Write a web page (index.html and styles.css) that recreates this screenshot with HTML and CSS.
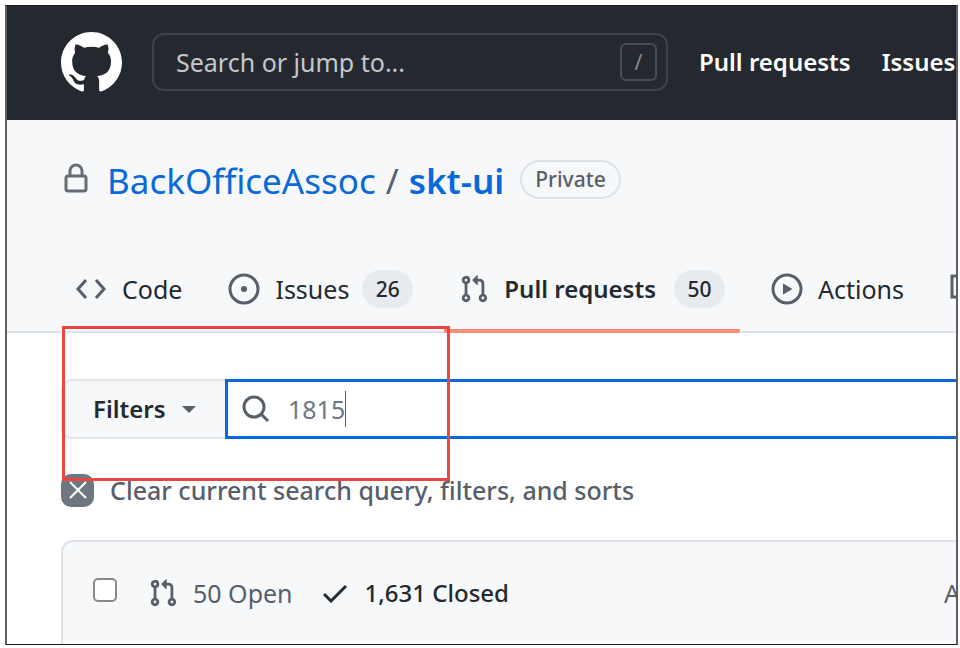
FILE: index.html
```html
<!DOCTYPE html>
<html lang="en">
<head>
<meta charset="utf-8">
<title>Pull requests · BackOfficeAssoc/skt-ui</title>
<link rel="stylesheet" href="styles.css">
</head>
<body>
<svg class="sprite" aria-hidden="true">
  <symbol id="pull-request" viewBox="0 0 16 16"><path fill-rule="evenodd" d="M7.177 3.073L9.573.677A.25.25 0 0110 .854v4.792a.25.25 0 01-.427.177L7.177 3.427a.25.25 0 010-.354zM3.75 2.5a.75.75 0 100 1.5.75.75 0 000-1.5zm-2.25.75a2.25 2.25 0 113 2.122v5.256a2.251 2.251 0 11-1.5 0V5.372A2.25 2.25 0 011.5 3.25zM11 2.5h-1V4h1a1 1 0 011 1v5.628a2.251 2.251 0 101.5 0V5A2.5 2.5 0 0011 2.5zm1 10.25a.75.75 0 111.5 0 .75.75 0 01-1.5 0zM3.75 12a.75.75 0 100 1.5.75.75 0 000-1.5z"/></symbol>
</svg>
<div class="frame">
  <header class="topbar">
    <a class="logo" href="#" aria-label="Homepage">
      <svg viewBox="0 0 16 16"><path fill-rule="evenodd" d="M8 0C3.58 0 0 3.58 0 8c0 3.54 2.29 6.53 5.47 7.59.4.07.55-.17.55-.38 0-.19-.01-.82-.01-1.49-2.01.37-2.53-.49-2.69-.94-.09-.23-.48-.94-.82-1.13-.28-.15-.68-.52-.01-.53.63-.01 1.08.58 1.23.82.72 1.21 1.87.87 2.33.66.07-.52.28-.87.51-1.07-1.78-.2-3.64-.89-3.64-3.95 0-.87.31-1.59.82-2.15-.08-.2-.36-1.02.08-2.12 0 0 .67-.21 2.2.82.64-.18 1.32-.27 2-.27.68 0 1.36.09 2 .27 1.53-1.04 2.2-.82 2.2-.82.44 1.1.16 1.92.08 2.12.51.56.82 1.27.82 2.15 0 3.07-1.87 3.75-3.65 3.95.29.25.54.73.54 1.48 0 1.07-.01 1.93-.01 2.2 0 .21.15.46.55.38A8.013 8.013 0 0016 8c0-4.42-3.58-8-8-8z"/></svg>
    </a>
    <label class="jump">
      <input type="text" placeholder="Search or jump to..." aria-label="Search or jump to">
      <kbd>/</kbd>
    </label>
    <nav class="topnav">
      <a href="#">Pull requests</a>
      <a href="#">Issues</a>
    </nav>
  </header>

  <section class="repo">
    <h1 class="title">
      <svg class="lock" viewBox="0 0 24 30"><rect x="2" y="13" width="20" height="15" rx="2"/><path d="M6 13V8a6 6 0 0112 0v5"/></svg>
      <span class="path"><a href="#">BackOfficeAssoc</a><span class="slash">/</span><a class="name" href="#">skt-ui</a></span>
      <span class="badge">Private</span>
    </h1>
    <nav class="tabs">
      <a class="tab" href="#"><svg class="icon" viewBox="0 0 32 32"><path class="line" d="M11 7L3 16l8 9M21 7l8 9-8 9"/></svg>Code</a>
      <a class="tab" href="#"><svg class="icon" viewBox="0 0 32 32"><circle class="line" cx="16" cy="16" r="14"/><circle cx="16" cy="16" r="3"/></svg>Issues<span class="count">26</span></a>
      <a class="tab current" href="#"><svg class="icon branch"><use href="#pull-request"/></svg>Pull requests<span class="count">50</span></a>
      <a class="tab" href="#"><svg class="icon" viewBox="0 0 32 32"><circle class="line" cx="16" cy="16" r="14"/><path d="M12 10.500v11l9.500-5.500z"/></svg>Actions</a>
      <a class="tab" href="#" aria-label="Projects"><svg class="icon" viewBox="0 0 32 32"><path class="line" d="M2 3h27v26H19v-5H2zM12 3v21"/></svg></a>
    </nav>
  </section>

  <main class="content">
    <div class="search">
      <button class="filters" type="button">Filters<span class="arrow"></span></button>
      <label class="query">
        <svg viewBox="0 0 28 28"><circle cx="12" cy="12" r="10"/><path d="M19 19l7 7"/></svg>
        <input type="text" value="1815" aria-label="Search all pull requests">
        <span class="caret"></span>
      </label>
    </div>
    <a class="clear" href="#">
      <span class="cross"><svg viewBox="0 0 20 20"><path d="M2 2l16 16M18 2L2 18"/></svg></span>
      Clear current search query, filters, and sorts
    </a>
    <div class="list">
      <input class="pick" type="checkbox" aria-label="Select all pull requests">
      <a class="state" href="#"><svg class="icon branch"><use href="#pull-request"/></svg>50 Open</a>
      <a class="state closed" href="#"><svg class="check" viewBox="0 0 24 20"><path d="M1 11l7 7L23 3"/></svg>1,631 Closed</a>
      <a class="author" href="#">Author</a>
    </div>
    <div class="highlight"></div>
  </main>
</div>
</body>
</html>
```
FILE: styles.css
```css
* { box-sizing: border-box; }
body {
  margin: 0;
  padding: 5px 2px 3px 5px;
  background: #fff;
  color: #24292f;
  font: 25px/36px "Noto Sans", "Open Sans", sans-serif;
}
a { color: inherit; text-decoration: none; }
svg { display: block; flex: none; }
input, button { font: inherit; color: inherit; }
.sprite { position: absolute; width: 0; height: 0; }
.frame { border: 1px solid; border-width: 1px 2px; border-color: #16191c #5c5f63; overflow: hidden; white-space: nowrap; }

.topbar { display: flex; align-items: center; height: 114px; padding: 0 0 2px 54px; background: #24292f; }
.logo svg { width: 61px; height: 61px; fill: #fff; }
.jump { display: flex; flex: none; align-items: center; width: 516px; height: 58px; margin-left: 30px; padding: 0 9px 0 22px; border: 2px solid #3d434a; border-radius: 12px; }
.jump input { flex: 1; min-width: 0; padding: 0; border: 0; outline: 0; background: none; }
.jump input::placeholder { color: #c5c8cb; opacity: 1; }
.jump kbd { width: 37px; height: 38px; border: 2px solid #484e54; border-radius: 6px; color: #84898e; font: 21px/34px "Noto Sans", sans-serif; text-align: center; }
.topnav { display: flex; gap: 31px; margin-left: 31px; color: #fff; font-size: 24px; font-weight: 600; }

.repo { border-bottom: 2px solid #dde2e8; background: #f6f8fa; }
.title { display: flex; align-items: center; margin: 0; padding: 35px 0 0 57px; font-size: 35px; font-weight: 400; line-height: 52px; }
.lock { width: 24px; height: 30px; margin: 0 19px 6px 0; fill: none; stroke: #656d76; stroke-width: 3; }
.path { color: #0969da; }
.slash { margin: 0 10px; color: #57606a; }
.name { font-weight: 600; }
.badge { margin: 0 0 4px 16px; padding: 0 13px; border: 2px solid #dde2e8; border-radius: 20px; color: #57606a; font-size: 21px; font-weight: 500; line-height: 35px; }
.tabs { display: flex; gap: 16px; margin-bottom: -2px; padding: 41px 0 0 53px; }
.tab { display: flex; flex: none; align-items: center; height: 85px; padding: 0 15px; border-bottom: 4px solid transparent; }
.icon { width: 32px; height: 32px; margin-right: 15px; fill: #57606a; }
.branch { width: 30px; height: 30px; }
.line { fill: none; stroke: #57606a; stroke-width: 3; }
.count { min-width: 51px; margin-left: 13px; padding: 0 12px; border-radius: 20px; background: #e7eaee; font-size: 21px; font-weight: 500; line-height: 38px; text-align: center; }
.current { border-color: #fd8c73; border-radius: 2px; font-size: 24px; font-weight: 600; }
.current .count { margin-left: 18px; }

.content { position: relative; padding: 46px 0 0 54px; }
.search { display: flex; height: 60px; }
.filters { display: flex; align-items: center; gap: 16px; width: 164px; padding: 0 0 0 30px; border: 2px solid #e2e5e8; border-right: 0; border-radius: 10px 0 0 10px; background: #f6f8fa; font-size: 24px; font-weight: 600; }
.arrow { border: 7px solid transparent; border-top-color: #57606a; border-bottom: 0; }
.query { display: flex; flex: 1; align-items: center; border: 3px solid #0969da; border-right: 0; padding-left: 14px; }
.query svg { width: 28px; height: 28px; margin-right: 18px; fill: none; stroke: #57606a; stroke-width: 3; }
.query input { width: 57px; padding: 0; border: 0; outline: 0; background: none; color: #6e7781; }
.caret { width: 1px; height: 36px; background: #57606a; }
.clear { display: flex; align-items: center; gap: 16px; margin-top: 33px; color: #57606a; font-weight: 500; }
.cross { display: grid; place-items: center; width: 33px; height: 33px; border-radius: 10px; background: #6e7781; }
.cross svg { width: 20px; height: 20px; fill: none; stroke: #fff; stroke-width: 2; }
.list { display: flex; align-items: center; height: 104px; margin-top: 32px; padding: 0 0 0 30px; border: 2px solid #dde2e8; border-width: 2px 0 0 2px; border-radius: 12px 0 0; background: #f6f8fa; }
.pick { appearance: none; flex: none; width: 24px; height: 24px; margin: 0 31px 6px 0; border: 2px solid #8a8a8a; border-radius: 5px; background: #fff; }
.state { display: flex; align-items: center; color: #57606a; }
.closed { margin-left: 30px; color: #24292f; font-size: 24px; font-weight: 500; }
.check { width: 24px; height: 20px; margin-right: 18px; fill: none; stroke: #24292f; stroke-width: 3; }
.author { width: 12px; margin-left: auto; color: #57606a; }
.highlight { position: absolute; top: -7px; left: 55px; width: 388px; height: 155px; border: 3px solid #e9463f; pointer-events: none; }
```
